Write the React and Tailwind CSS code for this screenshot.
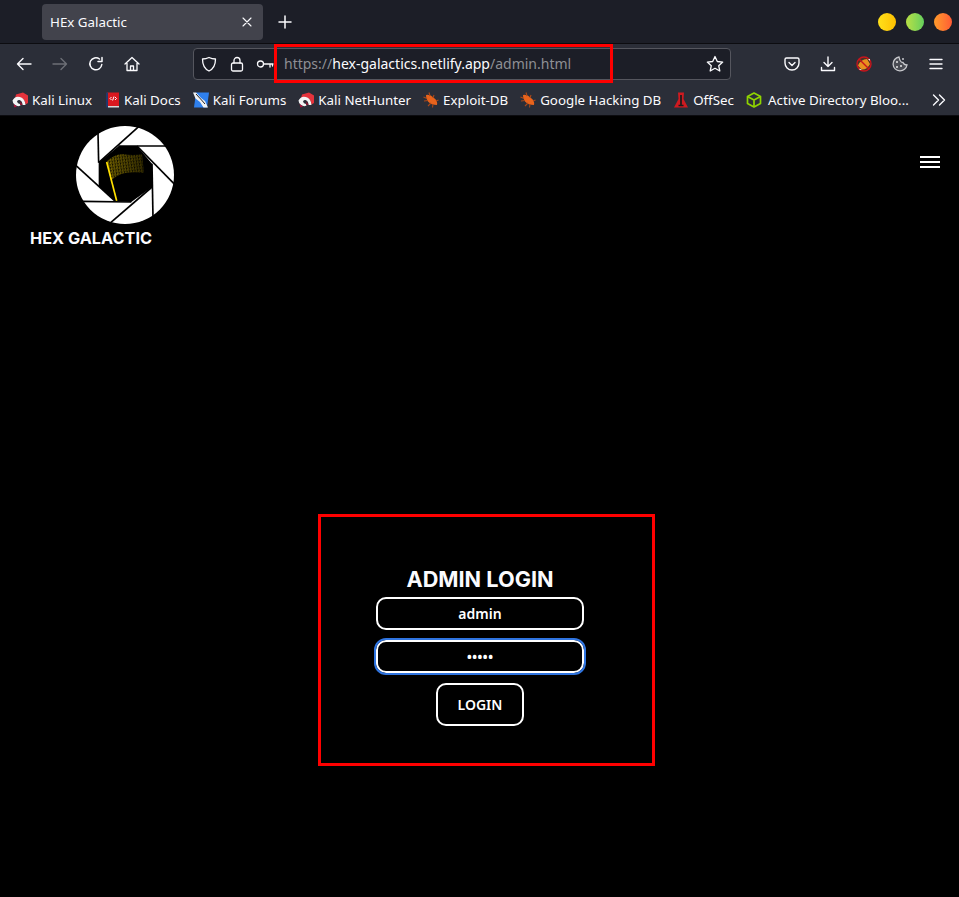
import React from "react";

const S = ({ size = 16, className = "", children, fill = "none", vb = "0 0 16 16", sw = 1.4, stroke = "#fbfbfe" }) => (
  <svg width={size} height={size} viewBox={vb} fill={fill} stroke={stroke} strokeWidth={sw} strokeLinecap="round" strokeLinejoin="round" className={`shrink-0 ${className}`}>
    {children}
  </svg>
);

const KaliIcon = () => (
  <svg width="16" height="16" viewBox="0 0 16 16" className="shrink-0">
    <path d="M4 2.5 L11 0.5 L16 3.5 L16 11 L13.5 12.5 Q13 7 8 5.5 Q5 5 3 6.5 Z" fill="#e5333c" />
    <path d="M0.5 8.5 Q3 3.5 8 5 Q13 6.5 13.5 13 L10.5 13 Q10.5 9 7.5 8 Q5.5 7.5 5 9.5 Q5.5 11.5 8 12 L8.5 13.5 Q6 15 3 13 Q0.5 11 0.5 8.5 Z" fill="#f4f4f4" />
    <path d="M1.5 12 L5 14.5 L2.5 15.5 Z" fill="#b3123a" />
    <path d="M8.5 9 L10.5 13 L8 13 Z" fill="#8d1431" />
  </svg>
);
const DocsIcon = () => (
  <svg width="16" height="16" viewBox="0 0 16 16" className="shrink-0">
    <rect x="3" y="0.5" width="12" height="14" fill="#d9181f" />
    <rect x="2" y="0.5" width="2" height="15" fill="#23386b" />
    <rect x="4" y="14" width="11" height="1.5" fill="#d8d8d8" />
    <path d="M7.5 5 L6 6.5 L7.5 8 M11 5 L12.5 6.5 L11 8 M10 4.5 L8.6 8.5" stroke="#fff" strokeWidth="1" fill="none" />
  </svg>
);
const ForumIcon = () => (
  <svg width="16" height="16" viewBox="0 0 16 16" className="shrink-0">
    <path d="M3 0.5 H16 L14 15.5 H1 Z" fill="#2f80ed" />
    <path d="M0 0.5 L3 0.5 L8 6 L12 9 L15 15.5 L10.5 15.5 L7 10 L2.5 6.5 Z" fill="#f2f2f2" />
    <path d="M3 2 L8.5 8 L12 12" stroke="#222" strokeWidth="1" fill="none" />
  </svg>
);
const BugIcon = () => (
  <svg width="16" height="16" viewBox="0 0 16 16" className="shrink-0">
    <path d="M3 3 Q7 2 11 6 Q15 9 14 13 Q8 13 5 9.5 Q2.5 6.5 3 3 Z" fill="#e8631c" />
    <path d="M0.5 5 L4 6.5 M1 9 L5 8.5 M6 0.5 L7 4 M11 3 L10 6 M5 14 L8 11 M9.5 15.5 L10 12 M15.5 8 L13 9" stroke="#a9481a" strokeWidth="1.1" />
  </svg>
);
const OffSecIcon = () => (
  <svg width="16" height="16" viewBox="0 0 16 16" className="shrink-0">
    <path d="M5 0.5 H11 L10.5 7 L15 15.5 H1 L5.5 7 Z" fill="#cf1a20" />
    <path d="M8 3 V14 M5.5 13.5 H10.5" stroke="#1a1a1a" strokeWidth="1.7" />
  </svg>
);
const BoxIcon = () => (
  <svg width="16" height="16" viewBox="0 0 16 16" fill="none" stroke="#8fd400" strokeWidth="1.7" strokeLinejoin="round" className="shrink-0 mr-[2px]">
    <path d="M8 1 L14.5 4.5 V11.5 L8 15 L1.5 11.5 V4.5 Z" />
    <path d="M1.5 4.5 L8 8 L14.5 4.5 M8 8 V15" />
  </svg>
);

const bookmarks = [
  { I: KaliIcon, t: "Kali Linux" },
  { I: DocsIcon, t: "Kali Docs" },
  { I: ForumIcon, t: "Kali Forums" },
  { I: KaliIcon, t: "Kali NetHunter" },
  { I: BugIcon, t: "Exploit-DB" },
  { I: BugIcon, t: "Google Hacking DB" },
  { I: OffSecIcon, t: "OffSec" },
  { I: BoxIcon, t: "Active Directory Bloo..." },
];

const Logo = () => (
  <svg width="106" height="106" viewBox="0 0 318 318" className="block">
    <defs>
      <pattern id="bits" width="8" height="9" patternUnits="userSpaceOnUse" patternTransform="rotate(-8)">
        <rect x="1" y="1" width="4.5" height="6" rx="1.5" fill="none" stroke="#f5cf00" strokeWidth="1.8" />
      </pattern>
      <linearGradient id="fade" x1="0" x2="1" y1="0" y2="0">
        <stop offset="0" stopColor="#fff" stopOpacity="1" />
        <stop offset="1" stopColor="#fff" stopOpacity="0.35" />
      </linearGradient>
      <mask id="fm" maskUnits="userSpaceOnUse" x="90" y="80" width="140" height="110">
        <rect x="90" y="80" width="140" height="110" fill="url(#fade)" />
      </mask>
    </defs>
    <circle cx="159" cy="159" r="147" fill="#fff" />
    <polygon points="80,122 140,72 195,72 240,125 240,195 178,240 130,238 80,192" fill="#000" />
    <g stroke="#000" strokeWidth="5" strokeLinecap="butt">
      <line x1="200" y1="14" x2="80" y2="122" />
      <line x1="286" y1="72" x2="140" y2="72" />
      <line x1="308" y1="187" x2="195" y2="72" />
      <line x1="116" y1="302" x2="240" y2="195" />
      <line x1="243" y1="288" x2="240" y2="125" />
      <line x1="30" y1="238" x2="178" y2="240" />
      <line x1="9" y1="128" x2="130" y2="238" />
      <line x1="78" y1="32" x2="80" y2="122" />
    </g>
    <path d="M103 120 Q125 98 150 96 Q180 102 210 97 L216 153 Q185 148 160 153 Q135 158 117 176 Z" fill="url(#bits)" mask="url(#fm)" />
    <line x1="104" y1="120" x2="134" y2="236" stroke="#ffe000" strokeWidth="5" />
  </svg>
);

export default function App() {
  return (
    <div className="relative w-full h-[897px] overflow-hidden flex flex-col bg-black font-['Noto_Sans',sans-serif] text-[#fbfbfe]">
      {/* tab strip */}
      <div className="h-[44px] shrink-0 bg-[#1c1e27] border-b border-[#0c0c10] flex items-center pl-[42px] pr-[7px]">
        <div className="w-[221px] h-[36px] rounded-[4px] bg-[#42434c] flex items-center justify-between pl-[8px] pr-[10px]">
          <span className="text-[13.33px] leading-none pt-[2px]">HEx Galactic</span>
          <S size={12} sw={1.1} vb="0 0 12 12"><path d="M2 2 L10 10 M10 2 L2 10" /></S>
        </div>
        <S size={14} sw={1.5} vb="0 0 14 14" className="ml-[15px]"><path d="M7 1 V13 M1 7 H13" /></S>
        <div className="ml-auto flex items-center gap-[10px]">
          <div className="w-[18px] h-[18px] rounded-full bg-gradient-to-r from-[#ffe01a] to-[#fdc000]" />
          <div className="w-[18px] h-[18px] rounded-full bg-gradient-to-r from-[#b7e044] to-[#62cf5c]" />
          <div className="w-[18px] h-[18px] rounded-full bg-gradient-to-r from-[#ff9a2a] to-[#ff5a34]" />
        </div>
      </div>

      {/* toolbar */}
      <div className="h-[41px] shrink-0 bg-[#2b2e38] flex items-center pb-[2px]">
        <div className="flex items-center pl-[16px] gap-[20px] w-[193px]">
          <S><path d="M15 8 H1.5 M7 2.5 L1.5 8 L7 13.5" /></S>
          <S stroke="#6d6f76"><path d="M1 8 H14.5 M9 2.5 L14.5 8 L9 13.5" /></S>
          <S sw={1.5}><path d="M13.8 8.5 A6 6 0 1 1 11.5 3" /><path d="M14 1.5 V5.5 H10" /></S>
          <S sw={1.3}><path d="M1 8 L8 1.5 L15 8 M3 7 V14.5 H13 V7 M6.5 14.5 V10 H9.5 V14.5" /></S>
        </div>
        <div className="w-[538px] h-[32px] rounded-[4px] bg-[#1c1e27] border border-[#55565e] flex items-center pl-[7px] pr-[6px]">
          <S size={16} sw={1.3}><path d="M8 1.5 Q11 3 14.5 3 Q14.5 12 8 15 Q1.5 12 1.5 3 Q5 3 8 1.5 Z" /></S>
          <S size={16} sw={1.3} className="ml-[12px]"><rect x="2.5" y="7" width="11" height="8" rx="1.5" /><path d="M5 7 V4.5 A3 3 0 0 1 11 4.5 V7" /></S>
          <S size={18} sw={1.3} vb="0 0 18 18" className="ml-[11px]"><circle cx="4.5" cy="9" r="3" /><path d="M7.5 9 H17 M14 9 V12 M16.5 9 V11" /></S>
          <span className="ml-[10px] text-[14px] leading-none whitespace-nowrap text-[#8e8f94]">
            https://<span className="text-[#fbfbfe]">hex-galactics.netlify.app</span>/admin.html
          </span>
          <S size={18} sw={1.3} vb="0 0 18 18" className="ml-auto"><path d="M9 1.5 L11.3 6.5 L16.7 7.1 L12.7 10.7 L13.8 16 L9 13.3 L4.2 16 L5.3 10.7 L1.3 7.1 L6.7 6.5 Z" /></S>
        </div>
        <div className="ml-[53px] flex items-center gap-[20px]">
          <S><path d="M2.5 2 H13.5 Q15 2 15 3.5 V7 A7 7 0 0 1 1 7 V3.5 Q1 2 2.5 2 Z" /><path d="M5 6.5 L8 9.5 L11 6.5" /></S>
          <S><path d="M8 1 V10.5 M4 6.5 L8 10.5 L12 6.5 M1.5 11.5 V14.5 H14.5 V11.5" /></S>
          <svg width="16" height="16" viewBox="0 0 16 16" className="shrink-0">
            <circle cx="8" cy="8" r="7" fill="#4a3226" stroke="#c8141c" strokeWidth="1.4" />
            <path d="M2 9.5 Q5 3 11 3 L14 8 Q11 14 5.5 13.5 Z" fill="#e8901f" />
            <path d="M3.5 12.5 L6 14 L3.5 14 Z M12 3 L14 5 L14 3 Z" fill="#f0eee8" />
            <path d="M3 3 L13 13" stroke="#c8141c" strokeWidth="1.4" />
          </svg>
          <svg width="16" height="16" viewBox="0 0 16 16" fill="none" className="shrink-0">
            <path d="M7 1 A7 7 0 1 0 15 9 Q12 9 11 6.5 Q8 6.5 7 1 Z" fill="#4a4c54" stroke="#c7c8cc" strokeWidth="1.3" />
            <circle cx="5" cy="6" r="1" fill="#e4e4e6" /><circle cx="9" cy="10" r="1" fill="#e4e4e6" /><circle cx="5" cy="11" r="1" fill="#e4e4e6" /><circle cx="11" cy="3" r="1" fill="#c7c8cc" />
          </svg>
          <S sw={1.4}><path d="M2 3.5 H14 M2 8 H14 M2 12.5 H14" /></S>
        </div>
      </div>

      {/* bookmarks */}
      <div className="h-[31px] shrink-0 bg-[#2b2e38] border-b border-[#0c0c10] flex items-center pl-[12px] pr-[13px]">
        <div className="flex items-center gap-[12px] -mt-[1px]">
          {bookmarks.map((b) => (
            <div key={b.t} className="flex items-center gap-[4px]">
              <b.I />
              <span className="text-[13.33px] leading-none whitespace-nowrap pt-[2px]">{b.t}</span>
            </div>
          ))}
        </div>
        <S size={14} sw={1.4} vb="0 0 14 14" className="ml-auto"><path d="M1.5 2 L6.5 7 L1.5 12 M7.5 2 L12.5 7 L7.5 12" /></S>
      </div>

      {/* page */}
      <div className="flex-1 bg-black relative">
        <div className="flex items-start justify-between pr-[19px]">
          <div className="pl-[30px] pt-[6px] w-[200px]">
            <div className="ml-[42px]"><Logo /></div>
            <div className="font-['Inter',sans-serif] font-bold text-[16.3px] leading-[20px] whitespace-nowrap">HEX GALACTIC</div>
          </div>
          <div className="flex flex-col gap-[3px] mt-[40px] w-[20px]">
            <div className="h-[2px] bg-white" />
            <div className="h-[2px] bg-white" />
            <div className="h-[2px] bg-white" />
          </div>
        </div>

        <div className="mt-[266px] ml-[318px] w-[337px] h-[252px] border-[3px] border-[#ff0000] flex flex-col items-center pt-[50px] pr-[13px]">
          <h1 className="font-['Inter',sans-serif] font-bold text-[21.7px] leading-[24px] whitespace-nowrap">ADMIN LOGIN</h1>
          <input readOnly value="admin" className="mt-[6px] w-[208px] h-[33px] rounded-[10px] border-2 border-white bg-black text-center text-[14px] font-semibold text-white outline-none" />
          <input readOnly type="password" value="admin" className="mt-[10px] w-[208px] h-[33px] rounded-[10px] border-2 border-white bg-black text-center text-[14px] font-semibold text-white outline-2 outline-[#2f74e0]" />
          <button className="mt-[10px] w-[88px] h-[43px] rounded-[10px] border-2 border-white bg-black text-[14px] font-semibold text-white">LOGIN</button>
        </div>
      </div>

      {/* annotation over the address bar */}
      <div className="absolute left-[274px] top-[44px] w-[339px] h-[39px] border-[3px] border-[#ff0000]" />
    </div>
  );
}
